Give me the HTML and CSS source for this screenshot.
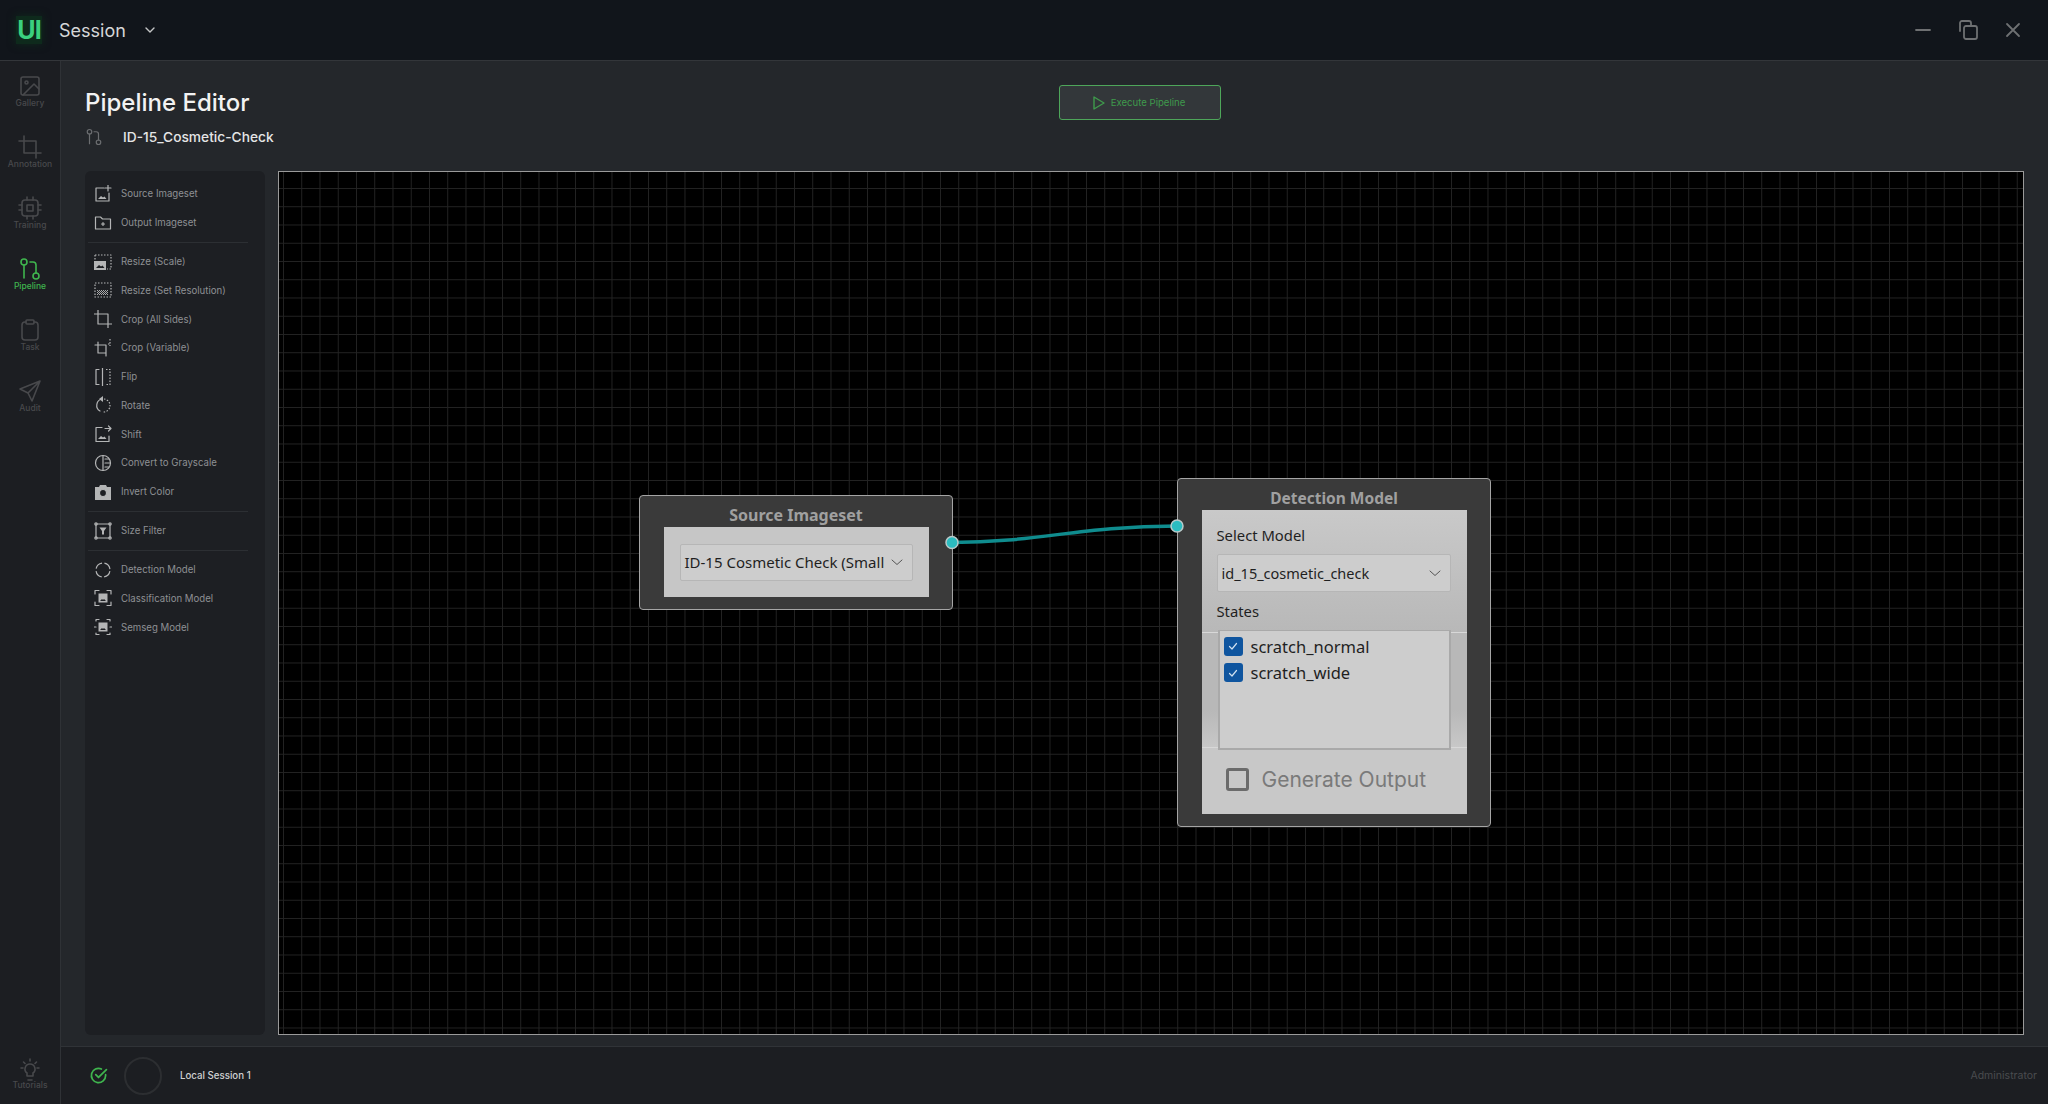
FILE: index.html
```html
<!DOCTYPE html>
<html lang="en">

<head>
    <meta charset="UTF-8">
    <title>Pipeline Editor</title>
    <link rel="stylesheet" href="styles.css">
</head>

<body>
    <header class="topbar">
        <div class="logo">UI</div>
        <span class="session">Session</span>
        <svg class="session-arrow" viewBox="0 0 12 12"><path d="M2 4l4 4 4-4"/></svg>
        <div class="window-btns">
            <svg viewBox="0 0 24 24"><path d="M5 12h14"/></svg>
            <svg viewBox="0 0 24 24"><path d="M4 13V5a2 2 0 0 1 2-2h7a2 2 0 0 1 2 2v2"/><rect x="8" y="8" width="13" height="13" rx="2"/></svg>
            <svg viewBox="0 0 24 24"><path d="M6 6l12 12M18 6L6 18"/></svg>
        </div>
    </header>

    <div class="app">
        <!-- 左侧导航 -->
        <nav class="sidebar">
            <a class="nav-item">
                <svg viewBox="0 0 24 24"><rect x="3" y="3" width="18" height="18" rx="2"/><circle cx="8.500" cy="8.500" r="1.500"/><path d="M21 15l-5-5L5 21"/></svg>
                <span>Gallery</span>
            </a>
            <a class="nav-item">
                <svg viewBox="0 0 24 24"><path d="M6 1v17h17M1 6h17v17"/></svg>
                <span>Annotation</span>
            </a>
            <a class="nav-item">
                <svg viewBox="0 0 24 24"><rect x="4" y="4" width="16" height="16" rx="3"/><rect x="9" y="9" width="6" height="6"/><path d="M9 1v3M15 1v3M9 20v3M15 20v3M20 9h3M20 14h3M1 9h3M1 14h3"/></svg>
                <span>Training</span>
            </a>
            <a class="nav-item active">
                <svg viewBox="0 0 24 24"><circle cx="6" cy="5" r="3"/><circle cx="18" cy="19" r="3"/><path d="M6 8v13M12 5h3a3 3 0 0 1 3 3v8"/></svg>
                <span>Pipeline</span>
            </a>
            <a class="nav-item">
                <svg viewBox="0 0 24 24"><path d="M16 4h1a3 3 0 0 1 3 3v12a3 3 0 0 1-3 3H7a3 3 0 0 1-3-3V7a3 3 0 0 1 3-3h1"/><rect x="8" y="2" width="8" height="4" rx="1"/></svg>
                <span>Task</span>
            </a>
            <a class="nav-item">
                <svg viewBox="0 0 24 24"><path d="M22 2L2 10l8 4 4 8zM22 2L10 14"/></svg>
                <span>Audit</span>
            </a>
            <a class="nav-item tutorials">
                <svg viewBox="0 0 24 24"><path d="M10 22h4M12 6a5 5 0 0 0-3 9v3h6v-3a5 5 0 0 0-3-9zM12 1v2M3 10h2M19 10h2M5.500 4l1.500 1.500M18.500 4L17 5.500"/></svg>
                <span>Tutorials</span>
            </a>
        </nav>

        <div class="content">
            <main class="main">
                <div class="page-head">
                    <div class="page-title">
                        <h1>Pipeline Editor</h1>
                        <div class="pipeline-name">
                            <svg viewBox="0 0 24 24"><circle cx="6" cy="5" r="3"/><circle cx="18" cy="19" r="3"/><path d="M6 8v13M12 5h3a3 3 0 0 1 3 3v8"/></svg>
                            <span>ID-15_Cosmetic-Check</span>
                        </div>
                    </div>
                    <button class="execute">
                        <svg viewBox="0 0 14 16"><path d="M2 2l10 6-10 6z"/></svg>
                        Execute Pipeline
                    </button>
                </div>

                <div class="editor">
                    <!-- 节点列表 -->
                    <aside class="palette">
                        <div class="tool">
                            <svg viewBox="0 0 18 18"><path d="M10 3H2v13h13V8"/><path d="M14 0v6M11 3h6"/><path class="solid" d="M4 14l3-3 2 1.500 1.500-1 2 2.500z"/></svg>
                            <span>Source Imageset</span>
                        </div>
                        <div class="tool">
                            <svg viewBox="0 0 18 18"><path d="M1.500 3h5l2 2h8v10h-15z"/><path d="M9 8.500v3M7.500 10h3"/></svg>
                            <span>Output Imageset</span>
                        </div>
                        <hr>
                        <div class="tool">
                            <svg viewBox="0 0 18 18"><path class="dots" d="M1 2h16v14h-4M1 2v5"/><path class="solid" d="M0 8h12v9H0z"/><path class="cut-fill" d="M2 15l3-3 2 1.500 1.500-1 2 2.500z"/></svg>
                            <span>Resize (Scale)</span>
                        </div>
                        <div class="tool">
                            <svg viewBox="0 0 18 18"><path class="dots" d="M1 2h16v14H1z"/><path class="check-fill" d="M3 9h1v1H3zM5 9h1v1H5zM7 9h1v1H7zM9 9h1v1H9zM11 9h1v1h-1zM13 9h1v1h-1zM4 10h1v1H4zM6 10h1v1H6zM8 10h1v1H8zM10 10h1v1h-1zM12 10h1v1h-1zM3 11h1v1H3zM5 11h1v1H5zM7 11h1v1H7zM9 11h1v1H9zM11 11h1v1h-1zM13 11h1v1h-1zM4 12h1v1H4zM6 12h1v1H6zM8 12h1v1H8zM10 12h1v1h-1zM12 12h1v1h-1zM3 13h1v1H3zM5 13h1v1H5zM7 13h1v1H7zM9 13h1v1H9zM11 13h1v1h-1zM13 13h1v1h-1z"/></svg>
                            <span>Resize (Set Resolution)</span>
                        </div>
                        <div class="tool">
                            <svg viewBox="0 0 18 18"><path d="M4 0v14h14M0 4h14v14"/></svg>
                            <span>Crop (All Sides)</span>
                        </div>
                        <div class="tool">
                            <svg viewBox="0 0 18 18"><path d="M4 3v11h8v3M1 6h11v8"/><path class="dots" d="M14 5h3M16 0v7"/></svg>
                            <span>Crop (Variable)</span>
                        </div>
                        <div class="tool">
                            <svg viewBox="0 0 18 18"><path d="M5 1.500H2v15h3M8.500 0v18"/><path class="dots" d="M12 1.500h4v15h-4"/></svg>
                            <span>Flip</span>
                        </div>
                        <div class="tool">
                            <svg viewBox="0 0 18 18"><path d="M8 3a6.500 6.500 0 0 0-2 12"/><path class="dots" d="M10 3a6.500 6.500 0 0 1-1 13"/><path class="solid" d="M9 0v6L5 3z"/></svg>
                            <span>Rotate</span>
                        </div>
                        <div class="tool">
                            <svg viewBox="0 0 18 18"><path d="M8 2.500H2v14h13V11"/><path d="M11 3.500h6M14.500 1l2.500 2.500L14.500 6"/><path class="solid" d="M4 14l3-3 2 1.500 1.500-1 2 2.500z"/></svg>
                            <span>Shift</span>
                        </div>
                        <div class="tool">
                            <svg viewBox="0 0 18 18"><circle cx="9" cy="9" r="7.500"/><path d="M9 1.500v15M11 5h4M11 9h5M11 13h4"/></svg>
                            <span>Convert to Grayscale</span>
                        </div>
                        <div class="tool">
                            <svg viewBox="0 0 18 18"><path class="solid" d="M1 4h4l1-2h6l1 2h4v13H1z"/><circle class="cut" cx="9" cy="10" r="3.500"/></svg>
                            <span>Invert Color</span>
                        </div>
                        <hr>
                        <div class="tool">
                            <svg viewBox="0 0 18 18"><rect x="2" y="2" width="14" height="14"/><path class="solid" d="M5.500 5.500h7L10 9v3.500H8V9z"/><circle cx="2" cy="2" r="1.200"/><circle cx="16" cy="2" r="1.200"/><circle cx="2" cy="16" r="1.200"/><circle cx="16" cy="16" r="1.200"/></svg>
                            <span>Size Filter</span>
                        </div>
                        <hr>
                        <div class="tool">
                            <svg viewBox="0 0 18 18"><circle class="ring" cx="9" cy="9" r="7"/></svg>
                            <span>Detection Model</span>
                        </div>
                        <div class="tool">
                            <svg viewBox="0 0 18 18"><path d="M1 5V1.500h4M13 1.500h4V5M17 13v3.500h-4M5 16.500H1V13"/><path class="solid" d="M4.500 4.500h9v9h-9z"/><path class="cut-fill" d="M6 12l2-2 1 1 1-1 2 2z"/></svg>
                            <span>Classification Model</span>
                        </div>
                        <div class="tool">
                            <svg viewBox="0 0 18 18"><path d="M2 3V1.500h3M13 1.500h3V3M16 15v1.500h-3M5 16.500H2V15M0 9h2M16 9h2"/><path class="solid" d="M4.500 4.500h9v9h-9z"/><path class="cut-fill" d="M6 12l2-2 1 1 1-1 2 2z"/></svg>
                            <span>Semseg Model</span>
                        </div>
                    </aside>

                    <!-- 画布 -->
                    <section class="canvas">
                        <svg class="edges" viewBox="0 0 1744 862">
                            <path class="edge" d="M673 370.500C760 370.500 800 354 898 354"/>
                            <circle class="port" cx="673" cy="370.500" r="6"/>
                            <circle class="port" cx="898" cy="354" r="6"/>
                        </svg>

                        <div class="node node-source">
                            <div class="node-title">Source Imageset</div>
                            <div class="node-body">
                                <div class="select">
                                    <span>ID-15 Cosmetic Check (Small</span>
                                    <svg viewBox="0 0 12 12"><path d="M1 4l5 4.500L11 4"/></svg>
                                </div>
                            </div>
                        </div>

                        <div class="node node-detection">
                            <div class="node-title">Detection Model</div>
                            <div class="node-body">
                                <div class="field-label">Select Model</div>
                                <div class="select">
                                    <span>id_15_cosmetic_check</span>
                                    <svg viewBox="0 0 12 12"><path d="M1 4l5 4.500L11 4"/></svg>
                                </div>
                                <div class="field-label states-label">States</div>
                                <div class="states-band">
                                    <div class="states">
                                        <label class="state"><i class="check"><svg viewBox="0 0 12 12"><path d="M2.500 6.500l2.500 2.500 4.500-5.500"/></svg></i>scratch_normal</label>
                                        <label class="state"><i class="check"><svg viewBox="0 0 12 12"><path d="M2.500 6.500l2.500 2.500 4.500-5.500"/></svg></i>scratch_wide</label>
                                    </div>
                                </div>
                                <div class="output">
                                    <i class="output-box"></i>
                                    <span>Generate Output</span>
                                </div>
                            </div>
                        </div>
                    </section>
                </div>
            </main>

            <footer class="statusbar">
                <svg class="status-ok" viewBox="0 0 24 24"><path d="M21 11v1a9 9 0 1 1-5.300-8.200"/><path d="M8.500 11l3.500 3.500L22 4.500"/></svg>
                <div class="avatar"></div>
                <span class="session-name">Local Session 1</span>
                <span class="user">Administrator</span>
            </footer>
        </div>
    </div>
</body>

</html>
```

FILE: styles.css
```css
* {
    box-sizing: border-box;
}

html,
body {
    height: 100%;
}

body {
    display: flex;
    flex-direction: column;
    height: 1104px;
    margin: 0;
    overflow: hidden;
    font-family: Inter, "Liberation Sans", sans-serif;
    color: #fff;
    background: #24272b;
}

svg {
    fill: none;
    stroke: currentColor;
    stroke-linecap: round;
    stroke-linejoin: round;
}

/* 顶栏 */
.topbar {
    display: flex;
    align-items: center;
    flex: 0 0 61px;
    padding-left: 16px;
    background: #11151b;
    border-bottom: 1px solid #33363a;
}

.logo {
    width: 26px;
    height: 28px;
    font-size: 25px;
    font-weight: 700;
    line-height: 28px;
    letter-spacing: -1px;
    text-align: center;
    color: #3bd07f;
    background: #0e2a1c;
    box-shadow: 0 0 8px #0e2a1c;
}

.session {
    margin-left: 17px;
    font-size: 18px;
    color: #d6d7d8;
}

.session-arrow {
    width: 12px;
    height: 12px;
    margin-left: 18px;
    stroke-width: 1.400;
    color: #c4c5c6;
}

.window-btns {
    display: flex;
    gap: 21px;
    margin-left: auto;
    margin-right: 23px;
    color: #6e7072;
}

.window-btns svg {
    width: 24px;
    height: 24px;
    stroke-width: 1.800;
}

.app {
    display: flex;
    flex: 1;
    min-height: 0;
}

/* 导航 */
.sidebar {
    display: flex;
    flex-direction: column;
    flex: 0 0 61px;
    padding-top: 12.500px;
    background: #1c1e22;
    border-right: 1px solid #2f3236;
}

.nav-item {
    display: flex;
    flex-direction: column;
    align-items: center;
    height: 61px;
    font-size: 8.500px;
    font-weight: 500;
    color: #48494c;
}

.nav-item svg {
    width: 24px;
    height: 24px;
    stroke-width: 1.600;
}

.nav-item span {
    line-height: 10px;
}

.nav-item.active {
    color: #3fb54e;
}

.tutorials {
    height: auto;
    margin-top: auto;
    padding-bottom: 14px;
}

.tutorials svg {
    margin-bottom: -2px;
}

.content {
    display: flex;
    flex-direction: column;
    flex: 1;
    min-width: 0;
}

/* 主区域 */
.main {
    flex: 1;
    min-height: 0;
    padding-left: 24px;
    background: #24272b;
}

.page-head {
    display: flex;
    height: 110px;
}

.page-title {
    width: 974px;
    padding-top: 27px;
}

h1 {
    margin: 0;
    font-size: 24px;
    font-weight: 500;
    line-height: 30px;
    color: #f2f2f2;
}

.pipeline-name {
    display: flex;
    align-items: center;
    margin-top: 10px;
    font-size: 13.750px;
    font-weight: 500;
    color: #e4e5e6;
}

.pipeline-name svg {
    width: 18px;
    height: 18px;
    margin-right: 20px;
    stroke-width: 1.600;
    color: #6b6d70;
}

.execute {
    display: flex;
    align-items: center;
    justify-content: center;
    gap: 5px;
    width: 162px;
    height: 35px;
    margin-top: 24px;
    padding: 0 3px 0 0;
    font-family: inherit;
    font-size: 9.600px;
    color: #3f9a4c;
    background: #33373a;
    border: 1px solid #4ea65a;
    border-radius: 3px;
}

.execute svg {
    width: 14px;
    height: 16px;
    stroke-width: 1.400;
}

.editor {
    display: flex;
    align-items: flex-start;
    gap: 13px;
}

/* 节点列表 */
.palette {
    flex: 0 0 180px;
    height: 864px;
    padding-top: 8.500px;
    background: #1d1f23;
    border-radius: 6px;
}

.tool {
    display: flex;
    align-items: center;
    height: 28.750px;
    padding-left: 9px;
    font-size: 9.650px;
    color: #8e9093;
}

.tool svg {
    flex: 0 0 18px;
    width: 18px;
    height: 18px;
    margin-right: 9px;
    stroke-width: 1.200;
    color: #b4b5b6;
}

.tool .solid {
    fill: currentColor;
    stroke: none;
}

.tool .dots {
    stroke-dasharray: 1.500 1.500;
    stroke-linecap: butt;
}

.tool .check-fill {
    stroke: none;
    fill: #a8a9aa;
}

.tool .cut-fill {
    stroke: none;
    fill: #1d1f23;
}

.tool .cut {
    fill: #1d1f23;
    stroke: #b4b5b6;
}

.tool .ring {
    stroke-linecap: butt;
    stroke-dasharray: 8.500 2.500;
    stroke-dashoffset: -1.250;
}

.palette hr {
    width: 160px;
    height: 1px;
    margin: 5px 0 4.250px 3px;
    background: #2c2f33;
    border: 0;
}

/* 画布 */
.canvas {
    position: relative;
    width: 1746px;
    height: 864px;
    background-color: #000;
    background-image:
        linear-gradient(#232323 1px, transparent 1px),
        linear-gradient(90deg, #232323 1px, transparent 1px);
    background-size: 18.250px 18.250px;
    background-position: 4px 16px;
    border: 1px solid #9a9a9a;
}

.edges {
    position: absolute;
    top: 0;
    left: 0;
    z-index: 2;
    width: 1744px;
    height: 862px;
}

.edge {
    stroke: #0f8c8e;
    stroke-width: 3.500;
}

.port {
    fill: #2bbcc0;
    stroke: #b9c9c9;
    stroke-width: 1.500;
}

.node {
    position: absolute;
    width: 314px;
    font-family: "Noto Sans", sans-serif;
    background: #3a3a3a;
    border: 1px solid #a5a5a5;
    border-radius: 4px;
}

.node-source {
    top: 323px;
    left: 360px;
    height: 115px;
}

.node-detection {
    top: 306px;
    left: 898px;
    height: 349px;
}

.node-title {
    height: 31px;
    padding-top: 6px;
    font-size: 16px;
    font-weight: 700;
    line-height: 27px;
    text-align: center;
    color: #a0a0a0;
}

.node-detection .node-title {
    font-size: 15.500px;
}

.node-body {
    width: 265px;
    margin: 0 auto;
    color: #1f1f1f;
    background: #c6c6c6;
}

.node-source .node-body {
    height: 70px;
    padding: 17px 16px 0;
}

.node-source .select {
    height: 37px;
    padding-bottom: 2px;
}

.node-source .select svg {
    margin-right: 4px;
}

.node-detection .node-body {
    height: 304px;
    padding-top: 13px;
    background: linear-gradient(#c9c9c9, #b8b8b8 122px, #b8b8b8 200px, #c8c8c8 238px);
}

.select {
    display: flex;
    align-items: center;
    justify-content: space-between;
    height: 38px;
    padding: 0 5px 0 4px;
    font-size: 15px;
    white-space: nowrap;
    background: #cdcdcd;
    border: 1px solid #b6b6b6;
    border-radius: 2px;
}

.select svg {
    flex: 0 0 12px;
    width: 12px;
    height: 12px;
    margin-right: 4px;
    stroke-width: 1;
    color: #555;
}

.node-detection .select {
    margin: 0 16px 0 15px;
    font-size: 14.500px;
}

.field-label {
    height: 24px;
    margin-left: 15px;
    margin-bottom: 7px;
    font-size: 14.800px;
    line-height: 24px;
}

.states-label {
    margin-top: 7px;
    margin-bottom: 9px;
}

.states-band {
    height: 116px;
    border-top: 1px solid #d8d8d8;
    border-bottom: 1px solid #d8d8d8;
}

.states {
    width: 233px;
    height: 120px;
    margin-top: -3px;
    margin-left: 16px;
    padding: 2px 4px;
    background: #cdcdcd;
    border: 2px solid #a9a9a9;
    border-top-width: 1px;
}

.state {
    display: flex;
    align-items: center;
    height: 26.500px;
    font-size: 16.500px;
}

.check {
    display: flex;
    align-items: center;
    justify-content: center;
    width: 19px;
    height: 19px;
    margin-right: 8px;
    color: #cfe0f0;
    background: #0f559f;
    border-radius: 3px;
}

.check svg {
    width: 12px;
    height: 12px;
    stroke-width: 1.200;
}

.output {
    display: flex;
    align-items: center;
    height: 62px;
    padding-left: 24px;
    font-family: Inter, sans-serif;
    font-size: 21px;
    color: #7a7a7a;
}

.output-box {
    width: 23px;
    height: 23px;
    margin-right: 13px;
    border: 3px solid #6b6b6b;
    border-radius: 3px;
}

/* 状态栏 */
.statusbar {
    display: flex;
    align-items: center;
    flex: 0 0 58px;
    padding: 0 11px 0 28px;
    font-size: 9.700px;
    font-weight: 500;
    background: #1c1e22;
    border-top: 1px solid #303337;
}

.status-ok {
    width: 19px;
    height: 19px;
    stroke-width: 2.200;
    color: #3fb54e;
}

.avatar {
    width: 38px;
    height: 38px;
    margin-left: 16px;
    border: 2px solid #2c2e31;
    border-radius: 50%;
}

.session-name {
    margin-left: 18px;
    color: #d0d1d2;
}

.user {
    margin-left: auto;
    font-size: 10.500px;
    font-weight: 400;
    color: #4a4c4f;
}
```
